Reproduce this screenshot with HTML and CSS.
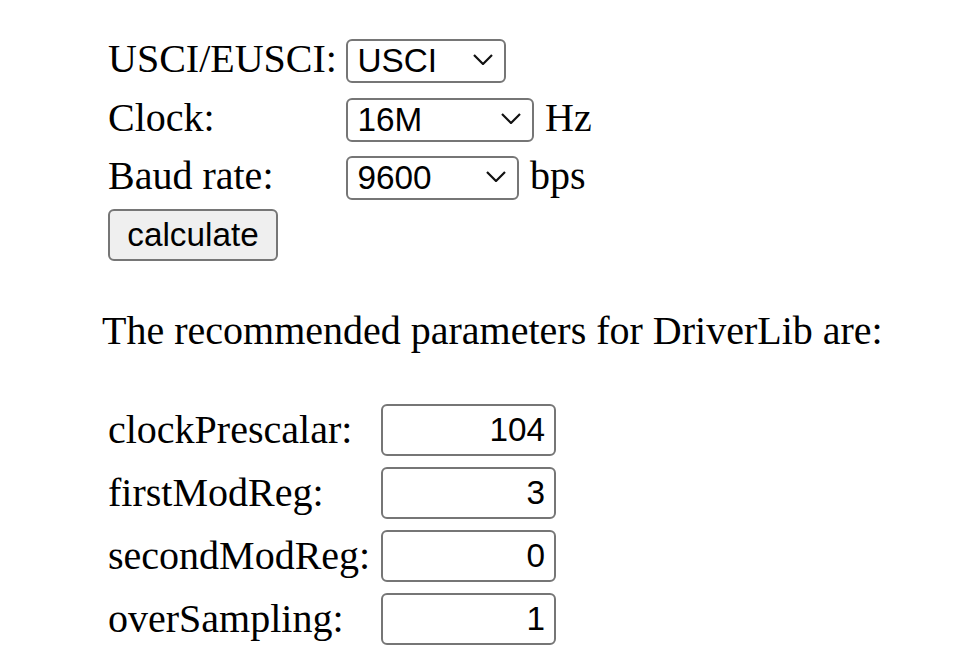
FILE: index.html
```html
<!DOCTYPE html>
<html>
<head>
<meta charset="utf-8">
<link rel="stylesheet" href="styles.css">
</head>
<body>
<div class="page">
  <div class="form">
    <div class="row">
      <label class="label">USCI/EUSCI:</label>
      <span class="select-wrap w-usci">
        <select class="select"><option>USCI</option><option>EUSCI</option></select>
        <svg class="chev" viewBox="0 0 20 11"><polyline points="1,1 10,10 19,1"/></svg>
      </span>
    </div>
    <div class="row">
      <label class="label">Clock:</label>
      <span class="select-wrap w-clock">
        <select class="select"><option>16M</option><option>8M</option><option>1M</option></select>
        <svg class="chev" viewBox="0 0 20 11"><polyline points="1,1 10,10 19,1"/></svg>
      </span>
      <span class="unit">Hz</span>
    </div>
    <div class="row">
      <label class="label">Baud rate:</label>
      <span class="select-wrap w-baud">
        <select class="select"><option>9600</option><option>115200</option></select>
        <svg class="chev" viewBox="0 0 20 11"><polyline points="1,1 10,10 19,1"/></svg>
      </span>
      <span class="unit">bps</span>
    </div>
    <div class="row btn-row">
      <button class="btn" type="button">calculate</button>
    </div>
  </div>

  <p class="intro">The recommended parameters for DriverLib are:</p>

  <div class="results">
    <div class="rrow"><label class="rlabel">clockPrescalar:</label><input class="num" type="text" value="104"></div>
    <div class="rrow"><label class="rlabel">firstModReg:</label><input class="num" type="text" value="3"></div>
    <div class="rrow"><label class="rlabel">secondModReg:</label><input class="num" type="text" value="0"></div>
    <div class="rrow"><label class="rlabel">overSampling:</label><input class="num" type="text" value="1"></div>
  </div>
</div>
</body>
</html>
```
FILE: styles.css
```css
html, body {
  margin: 0;
  padding: 0;
  background: #ffffff;
}

.page {
  padding: 37px 0 0 102px;
  font-family: "Liberation Serif", "Times New Roman", serif;
  font-size: 40px;
  line-height: 44px;
  color: #000000;
}

.form {
  display: flex;
  flex-direction: column;
  gap: 14.5px;
  padding-left: 6px;
}

.row {
  display: flex;
  align-items: center;
  height: 44px;
}

.label {
  width: 238px;
  flex: none;
}

.select-wrap {
  position: relative;
  display: inline-block;
  height: 44px;
  flex: none;
}

.w-usci { width: 160px; }
.w-clock { width: 188px; }
.w-baud { width: 173px; }

.select {
  -webkit-appearance: none;
  appearance: none;
  box-sizing: border-box;
  width: 100%;
  height: 44px;
  margin: 0;
  padding: 0 40px 0 9.5px;
  border: 2.5px solid #767676;
  border-radius: 6px;
  background: #ffffff;
  color: #000000;
  font-family: "Liberation Sans", Arial, sans-serif;
  font-size: 33.3px;
  line-height: 38px;
}

.chev {
  position: absolute;
  right: 13px;
  top: 17px;
  width: 20px;
  height: 11px;
  fill: none;
  stroke: #111111;
  stroke-width: 2.2;
  pointer-events: none;
}

.unit {
  margin-left: 11px;
}

.btn-row {
  height: 52px;
  margin-top: -3.5px;
}

.btn {
  box-sizing: border-box;
  width: 170px;
  height: 52px;
  margin: 0;
  padding: 0;
  border: 2.5px solid #767676;
  border-radius: 6px;
  background: #efefef;
  color: #000000;
  font-family: "Liberation Sans", Arial, sans-serif;
  font-size: 33.3px;
}

.intro {
  margin: 48px 0 0 0;
  height: 44px;
}

.results {
  display: flex;
  flex-direction: column;
  gap: 11px;
  margin-top: 51px;
  padding-left: 6px;
}

.rrow {
  display: flex;
  align-items: center;
  height: 52px;
}

.rlabel {
  width: 273px;
  flex: none;
}

.num {
  box-sizing: border-box;
  width: 175px;
  height: 52px;
  margin: 0;
  padding: 0 9px 0 6px;
  border: 2.5px solid #767676;
  border-radius: 6px;
  background: #ffffff;
  color: #000000;
  text-align: right;
  font-family: "Liberation Sans", Arial, sans-serif;
  font-size: 33.3px;
}
```
